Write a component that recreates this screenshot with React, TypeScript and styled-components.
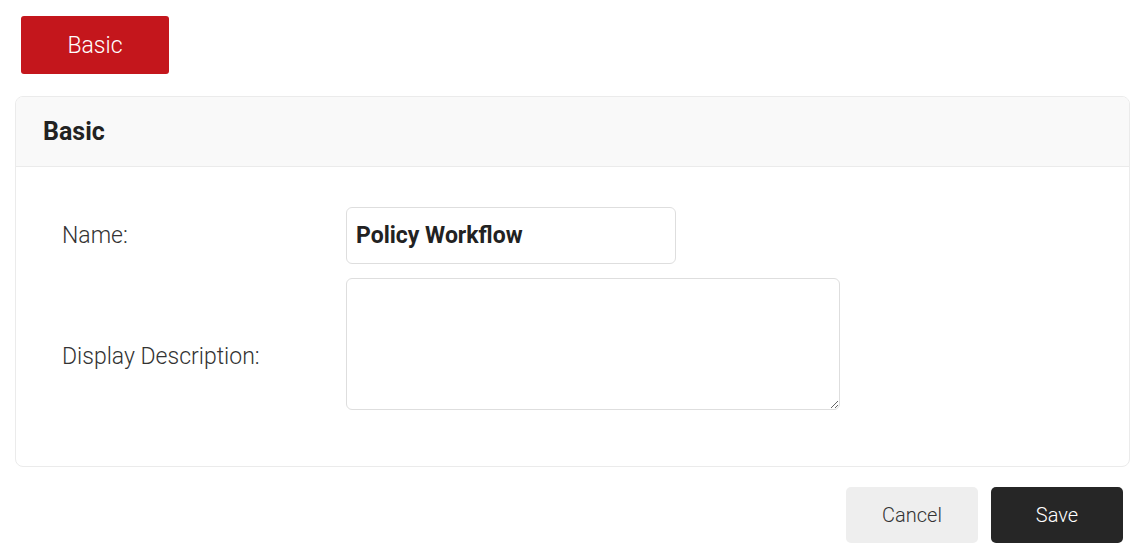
import React from 'react'
import styled, { createGlobalStyle } from 'styled-components'

const GlobalStyle = createGlobalStyle`
  html, body {
    margin: 0;
    padding: 0;
    background: #ffffff;
    font-family: Roboto, 'Liberation Sans', Arial, sans-serif;
    color: #333333;
  }
  * {
    box-sizing: border-box;
  }
`

const App: React.FC = () => {
  return (
    <>
      <GlobalStyle />
      <Page>
        <TabBar>
          <TabButton type='button'>Basic</TabButton>
        </TabBar>

        <Card>
          <CardHeader>
            <CardTitle>Basic</CardTitle>
          </CardHeader>
          <CardBody>
            <FormRow>
              <Label htmlFor='name'>Name:</Label>
              <NameInput id='name' type='text' defaultValue='Policy Workflow' />
            </FormRow>
            <FormRow>
              <Label htmlFor='desc' offset='24px'>
                Display Description:
              </Label>
              <DescArea id='desc' />
            </FormRow>
          </CardBody>
        </Card>

        <Actions>
          <ActionButton type='button' variant='light'>
            Cancel
          </ActionButton>
          <ActionButton type='button' variant='dark'>
            Save
          </ActionButton>
        </Actions>
      </Page>
    </>
  )
}

export default App

const Page = styled.div`
  width: 1139px;
  padding: 16px 9px 0 15px;
`

const TabBar = styled.div`
  display: flex;
  padding-left: 6px;
`

const TabButton = styled.button`
  width: 148px;
  height: 58px;
  border: none;
  border-radius: 3px;
  background: #c4161c;
  color: #ffffff;
  font-family: Roboto, 'Liberation Sans', Arial, sans-serif;
  font-size: 23px;
  font-weight: 300;
  cursor: pointer;
`

const Card = styled.section`
  margin-top: 22px;
  border: 1px solid #ebebeb;
  border-radius: 8px;
  overflow: hidden;
`

const CardHeader = styled.div`
  height: 70px;
  display: flex;
  align-items: center;
  padding-left: 27px;
  background: #f9f9f9;
  border-bottom: 1px solid #ebebeb;
`

const CardTitle = styled.h2`
  margin: 0;
  font-size: 25px;
  font-weight: 700;
  color: #222222;
`

const CardBody = styled.div`
  display: flex;
  flex-direction: column;
  gap: 14px;
  padding: 40px 0 56px 46px;
`

const FormRow = styled.div`
  display: grid;
  grid-template-columns: 284px auto;
  align-items: center;
`

const Label = styled.label<{ offset?: string }>`
  font-size: 23px;
  font-weight: 300;
  color: #333333;
  padding-top: ${(p) => p.offset ?? '0'};
`

const NameInput = styled.input`
  width: 330px;
  height: 57px;
  padding: 0 9px;
  border: 1px solid #dedede;
  border-radius: 6px;
  font-family: Roboto, 'Liberation Sans', Arial, sans-serif;
  font-size: 23px;
  font-weight: 700;
  color: #222222;
  outline: none;
`

const DescArea = styled.textarea`
  width: 494px;
  height: 132px;
  padding: 10px;
  border: 1px solid #dedede;
  border-radius: 6px;
  font-family: Roboto, 'Liberation Sans', Arial, sans-serif;
  font-size: 18px;
  outline: none;
  display: block;
`

const Actions = styled.div`
  display: flex;
  justify-content: flex-end;
  gap: 13px;
  margin-top: 20px;
  padding-right: 7px;
`

const ActionButton = styled.button<{ variant: 'light' | 'dark' }>`
  width: 132px;
  height: 56px;
  border: none;
  border-radius: 5px;
  background: ${(p) => (p.variant === 'dark' ? '#262626' : '#eeeeee')};
  color: ${(p) => (p.variant === 'dark' ? '#ffffff' : '#333333')};
  font-family: Roboto, 'Liberation Sans', Arial, sans-serif;
  font-size: 20px;
  font-weight: 300;
  cursor: pointer;
`
